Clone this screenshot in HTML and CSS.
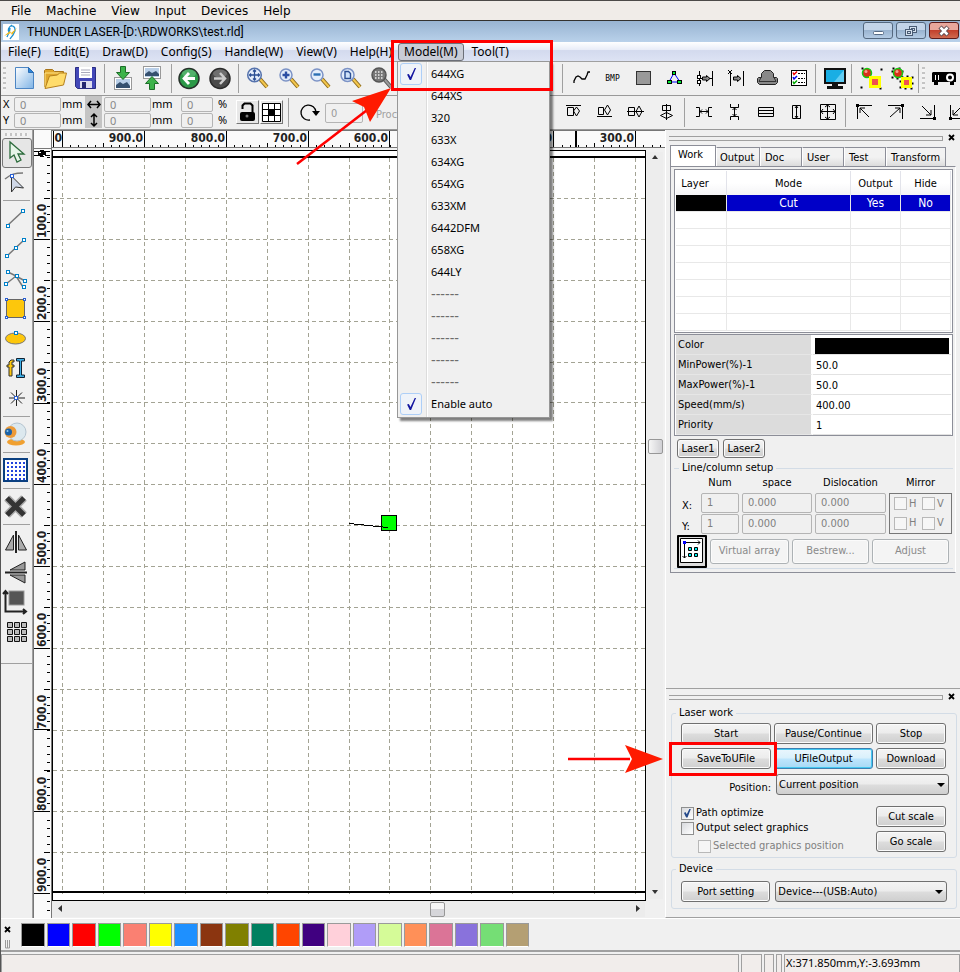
FILE: index.html
```html
<!DOCTYPE html>
<html lang="en">
<head>
<meta charset="utf-8">
<title>THUNDER LASER</title>
<link rel="stylesheet" href="styles.css">
</head>
<body>
<nav class="host-menu" aria-label="Virtual machine">
  <button>File</button><button>Machine</button><button>View</button><button>Input</button><button>Devices</button><button>Help</button>
</nav>
<div class="window">
  <header class="titlebar">
    <svg class="logo" width="16" height="16" viewBox="0 0 16 16"><rect width="16" height="16" fill="#fff"/><path d="M9 1C6 3 4 5 6 8M8 2c4-1 5 4 3 7-1 3-3 4-4 6M4 13c1-3 3-5 3-9" fill="none" stroke="#1c8fd0" stroke-width="1.300"/><path d="M1 12l6-5 1 2 6-5-5 7-1-2z" fill="#f0b81c"/></svg>
    <h1>THUNDER LASER-[D:\RDWORKS\test.rld]</h1>
    <div class="win-buttons">
      <button aria-label="Minimize"><svg width="30" height="16"><rect x="10.500" y="8.500" width="10" height="3" rx="1" fill="#fff" stroke="#566b85"/></svg></button>
      <button aria-label="Restore"><svg width="30" height="16" fill="#d5e1ee" stroke="#4a5c74"><rect x="13.500" y="3.500" width="7" height="6"/><rect x="15.500" y="5.500" width="3" height="2"/><rect x="9.500" y="6.500" width="7" height="6"/><rect x="11.500" y="8.500" width="3" height="2"/></svg></button>
      <button class="close" aria-label="Close"><svg width="30" height="16"><path d="M11 4l8 8M19 4l-8 8" stroke="#5c4a50" stroke-width="4.500"/><path d="M11.500 4.500l7 7M18.500 4.500l-7 7" stroke="#fff" stroke-width="2.500"/></svg></button>
    </div>
  </header>
  <nav class="menubar" aria-label="Main">
    <button>File(F)</button><button>Edit(E)</button><button>Draw(D)</button><button>Config(S)</button><button>Handle(W)</button><button>View(V)</button><button>Help(H)</button>
    <div class="open-menu">
      <button class="active">Model(M)</button>
      <ul class="popup">
        <li class="on"><button><i></i>644XG</button></li>
        <li><button>644XS</button></li>
        <li><button>320</button></li>
        <li><button>633X</button></li>
        <li><button>634XG</button></li>
        <li><button>654XG</button></li>
        <li><button>633XM</button></li>
        <li><button>6442DFM</button></li>
        <li><button>658XG</button></li>
        <li><button>644LY</button></li>
        <li class="off"><button disabled>------</button></li>
        <li class="off"><button disabled>------</button></li>
        <li class="off"><button disabled>------</button></li>
        <li class="off"><button disabled>------</button></li>
        <li class="off"><button disabled>------</button></li>
        <li class="on"><button><i></i>Enable auto</button></li>
      </ul>
      <span class="mark mark-model"></span>
      <svg class="arrow arrow-model" width="100" height="80"><path d="M2 77L76 20" stroke="#f00" stroke-width="2.500"/><path d="M96 1L57 14 69 20 75 35z" fill="#ff1a00"/></svg>
    </div>
    <button>Tool(T)</button>
  </nav>

  <div class="toolbar">
    <span class="grip"></span>
    <button class="tool" aria-label="New"><svg viewBox="0 0 31 32"><defs><linearGradient id="gp" x2="1" y2="1"><stop offset="0" stop-color="#fff"/><stop offset="1" stop-color="#7fb4e6"/></linearGradient></defs><path d="M5.500 5.500h13l5 5v16h-18z" fill="url(#gp)" stroke="#4d86c4"/><path d="M18.500 5.500v5h5z" fill="#2f86d6" stroke="#2a6db5"/></svg></button>
    <button class="tool" aria-label="Open"><svg viewBox="0 0 31 32"><path d="M3.500 25V8.500l1-1h7l2 2h9v3" fill="#e0a72c" stroke="#a8741a"/><path d="M4 26V11h17" fill="none" stroke="#ffe58a"/><path d="M4 26.500L8.500 14l8-1 2-2h7l-3 12z" fill="#ffdc6b" stroke="#b5801d"/></svg></button>
    <button class="tool" aria-label="Save"><svg viewBox="0 0 31 32"><path d="M3.500 5.500h20v21h-18l-2-2z" fill="#4348b8" stroke="#2a2e83"/><rect x="7" y="5" width="13" height="11" fill="#fff"/><path d="M9 8h9M9 10.500h9M9 13h9" stroke="#aab"/><rect x="8" y="19" width="12" height="7" fill="#dde"/><rect x="10" y="20" width="4" height="6" fill="#24266e"/></svg></button>
    <span class="sep"></span>
    <button class="tool" aria-label="Import"><svg viewBox="0 0 31 32"><rect x="6.500" y="15.500" width="17" height="12" fill="#fff" stroke="#999"/><rect x="8" y="17" width="14" height="9" fill="#b9cfe8"/><path d="M8 26l0-3 4-3 3 2 4-2 3 4v2z" fill="#35506f"/><path d="M12.500 4.500h5v6h4l-6.500 7-6.500-7h4z" fill="#3cb34a" stroke="#1d6e28"/></svg></button>
    <button class="tool" aria-label="Export"><svg viewBox="0 0 31 32"><rect x="4.500" y="4.500" width="17" height="12" fill="#fff" stroke="#999"/><rect x="6" y="6" width="14" height="9" fill="#b9cfe8"/><path d="M6 14l0-2 4-3 3 2 4-2 3 3v2z" fill="#35506f"/><path d="M10.500 27.500h5v-6h4l-6.500-7-6.500 7h4z" fill="#3cb34a" stroke="#1d6e28"/></svg></button>
    <span class="sep"></span>
    <button class="tool" aria-label="Undo"><svg viewBox="0 0 31 32"><circle cx="14" cy="16.500" r="10" fill="#2c9a48" stroke="#26312a" stroke-width="1.500"/><ellipse cx="14" cy="11.500" rx="7" ry="4" fill="#6cc184" opacity=".6"/><path d="M14 11l-5 5.500 5 5.500M9 16.500h11" fill="none" stroke="#fff" stroke-width="2.800"/></svg></button>
    <button class="tool" aria-label="Redo"><svg viewBox="0 0 31 32"><circle cx="14" cy="16.500" r="10" fill="#4a4a4a" stroke="#2b2b2b" stroke-width="1.500"/><ellipse cx="14" cy="11.500" rx="7" ry="4" fill="#888" opacity=".6"/><path d="M14 11l5 5.500-5 5.500M19 16.500H8" fill="none" stroke="#ccc" stroke-width="2.500"/></svg></button>
    <span class="sep"></span>
    <button class="tool" aria-label="Pan"><svg viewBox="0 0 31 32"><path d="M18 17l7 8" stroke="#8b6a1d" stroke-width="4"/><path d="M18 17l7 8" stroke="#f3c64c" stroke-width="2"/><circle cx="12.500" cy="13" r="6.800" fill="#e4eefb" stroke="#5673ad" stroke-width="1.500"/><path d="M12.500 8v10M7.500 13h10M11 9.500l1.500-1.500 1.500 1.500M11 16.500l1.500 1.500 1.500-1.500M9 11.500L7.500 13 9 14.500M16 11.500l1.500 1.500-1.500 1.500" fill="none" stroke="#2b4f94" stroke-width="1.300"/></svg></button>
    <button class="tool" aria-label="Zoom in"><svg viewBox="0 0 31 32"><path d="M18 17l7 8" stroke="#8b6a1d" stroke-width="4"/><path d="M18 17l7 8" stroke="#f3c64c" stroke-width="2"/><circle cx="13" cy="13" r="6" fill="#e4eefb" stroke="#7c93c6" stroke-width="1.500"/><path d="M13 9.500v7M9.500 13h7" stroke="#2b4fa4" stroke-width="2.400"/></svg></button>
    <button class="tool" aria-label="Zoom out"><svg viewBox="0 0 31 32"><path d="M18 17l7 8" stroke="#8b6a1d" stroke-width="4"/><path d="M18 17l7 8" stroke="#f3c64c" stroke-width="2"/><circle cx="13" cy="13" r="6" fill="#e4eefb" stroke="#7c93c6" stroke-width="1.500"/><path d="M9.500 12.500h7" stroke="#2b6fb4" stroke-width="2.400"/></svg></button>
    <button class="tool" aria-label="Zoom page"><svg viewBox="0 0 31 32"><path d="M18 17l7 8" stroke="#8b6a1d" stroke-width="4"/><path d="M18 17l7 8" stroke="#f3c64c" stroke-width="2"/><circle cx="12.500" cy="13" r="6.500" fill="#e4eefb" stroke="#7c93c6" stroke-width="1.500"/><path d="M10 9.500h3.500l2 2v5H10z" fill="#cfe2fa" stroke="#2b4f94" stroke-width="1.400"/></svg></button>
    <button class="tool" aria-label="Zoom selection"><svg viewBox="0 0 31 32"><path d="M18 17l7 8" stroke="#555" stroke-width="4"/><path d="M18 17l7 8" stroke="#999" stroke-width="2"/><circle cx="13" cy="13" r="7" fill="#777" stroke="#555" stroke-width="1.500"/><path d="M9 10h9M9 13h9M9 16h9" stroke="#eee" stroke-width="1.300" stroke-dasharray="1.500 1.500"/></svg></button>
    <span class="covered"></span>
    <span class="sep"></span>
    <button class="tool" aria-label="Curve"><svg viewBox="0 0 31 32"><path d="M8 21v-2l2-4 2-1 2 1 2 2h3l2-4 1-3h2" fill="none" stroke="#000" stroke-width="1.300"/></svg></button>
    <button class="tool" aria-label="Bitmap"><svg viewBox="0 0 31 32"><text x="15.500" y="19" class="bmp">BMP</text></svg></button>
    <button class="tool" aria-label="Fill"><svg viewBox="0 0 31 32"><rect x="8.500" y="9.500" width="14" height="13" fill="#999" stroke="#333"/></svg></button>
    <button class="tool" aria-label="Nodes"><svg viewBox="0 0 31 32"><path d="M15 11l-5 9M15 11l6 9M10 20h10" stroke="#00f"/><g fill="#0e3" stroke="#000"><rect x="13.500" y="9.500" width="3" height="3"/><rect x="8.500" y="18.500" width="4" height="3"/><rect x="18.500" y="18.500" width="4" height="3"/></g></svg></button>
    <button class="tool" aria-label="Align ends"><svg viewBox="0 0 31 32"><path d="M9.500 9v15M22.500 9v15M9 16.500h14" stroke="#000"/><path d="M12.500 15h4v-1.500l3.500 3-3.500 3V18h-4z" fill="#888" stroke="#000"/><rect x="7.500" y="13.500" width="3" height="3" fill="#fff" stroke="#000"/><rect x="7.500" y="18.500" width="3" height="3" fill="#fff" stroke="#000"/></svg></button>
    <button class="tool" aria-label="Align edge"><svg viewBox="0 0 31 32"><path d="M9.500 9v15M22.500 9v15M7 8l4 4M11 8l-4 4" stroke="#000"/><path d="M12.500 15h4v-1.500l3.500 3-3.500 3V18h-4z" fill="#888" stroke="#000"/></svg></button>
    <button class="tool" aria-label="Home"><svg viewBox="0 0 31 32"><path d="M12.500 8.500h6l3 3v4h3l1 1v4l-2 2h-16l-2-2v-4l1-1h3v-4z" fill="#888" stroke="#222"/><path d="M9 15.500l-2 4h17l-2-4" fill="none" stroke="#333"/></svg></button>
    <button class="tool" aria-label="Options"><svg viewBox="0 0 31 32"><rect x="8.500" y="8.500" width="15" height="15" fill="#fff" stroke="#000"/><path d="M15 11.500h7M15 16.500h7M15 20.500h7" stroke="#000" stroke-dasharray="2 1"/><g fill="none" stroke-width="1.500"><path d="M10 10.500l1 2 3-3" stroke="#e00"/><path d="M10 15l1 2 3-3" stroke="#00e"/><path d="M10 19.500l1 2 3-3" stroke="#0a0"/></g></svg></button>
    <span class="sep"></span>
    <button class="tool" aria-label="Preview"><svg viewBox="0 0 31 32"><rect x="5" y="6" width="22" height="16" fill="#111"/><rect x="7" y="8" width="18" height="12" fill="#19aee4"/><path d="M15 20L25 8v12z" fill="#62cdf3"/><path d="M13 22h6v2h5v3H8v-3h5z" fill="#111"/></svg></button>
    <span class="sep"></span>
    <button class="tool" aria-label="Group"><svg viewBox="0 0 31 32"><path d="M6.500 6.500h20v20h-20z" fill="none" stroke="#000" stroke-width="2" stroke-dasharray="2 18"/><circle cx="12" cy="11" r="4.500" fill="#d8301a" stroke="#1c1" stroke-width="1.500"/><circle cx="11" cy="9.500" r="1.500" fill="#f9a090"/><rect x="15.500" y="15.500" width="9" height="9" fill="#f05050" stroke="#ff0" stroke-width="3"/></svg></button>
    <button class="tool" aria-label="Ungroup"><svg viewBox="0 0 31 32"><path d="M6.500 6.500h10v10h-10zM14.500 14.500h12v12h-12z" fill="none" stroke="#000" stroke-width="2" stroke-dasharray="2 4"/><circle cx="12" cy="11" r="4.500" fill="#d8301a" stroke="#1c1" stroke-width="1.500"/><circle cx="11" cy="9.500" r="1.500" fill="#f9a090"/><rect x="16.500" y="16.500" width="8" height="8" fill="#f05050" stroke="#ff0" stroke-width="3"/></svg></button>
    <span class="sep"></span>
    <span class="grip"></span>
    <button class="tool" aria-label="Device"><svg viewBox="0 0 31 32"><path d="M4 10h22l1 1v9h-2v3h-4v-3H9v3H5v-3H3v-9z" fill="#000"/><path d="M6.500 13v5M9.500 13v5" stroke="#fff"/><circle cx="21" cy="15.500" r="3" fill="none" stroke="#fff" stroke-width="2"/></svg></button>
  </div>

  <div class="toolbar second">
    <div class="coords">
      <label for="px">X</label><input id="px" value="0" disabled><span>mm</span><i class="arr"><svg width="18" height="16"><path d="M3 8.500h12M6 5L3 8.500 6 12M12 5l3 3.500-3 3.500" fill="none" stroke="#000" stroke-width="1.500"/></svg></i><input aria-label="Width" value="0" disabled><span>mm</span><input class="pct" aria-label="Width percent" value="0" disabled><span>%</span>
      <label for="py">Y</label><input id="py" value="0" disabled><span>mm</span><i class="arr"><svg width="18" height="16"><path d="M9 2v12M6 5l3-3 3 3M6 11l3 3 3-3" fill="none" stroke="#000" stroke-width="1.500"/></svg></i><input aria-label="Height" value="0" disabled><span>mm</span><input class="pct" aria-label="Height percent" value="0" disabled><span>%</span>
    </div>
    <button class="raised" aria-label="Lock ratio"><svg width="20" height="22"><path d="M5.500 8V4.500l2-2h6l2 2V12" fill="none" stroke="#000" stroke-width="2"/><rect x="3" y="11" width="15" height="9" rx="2"/><circle cx="10" cy="15" r="1.500" fill="#777"/></svg></button>
    <button class="raised" aria-label="Anchor"><svg width="20" height="22"><path d="M1.500 2.500h18v18h-18zM7.500 2v18M13.500 2v18M1 8.500h18M1 14.500h18" fill="#fff" stroke="#000"/><rect x="8" y="9" width="5" height="5"/></svg></button>
    <span class="sep"></span>
    <button class="tool rotate" aria-label="Rotate"><svg viewBox="0 0 31 32"><path d="M17 24a7.500 7.500 0 1 1 6-8" fill="none" stroke="#000" stroke-width="1.300"/><path d="M19 15h8l-4 5z"/></svg></button>
    <input class="angle" aria-label="Angle" value="0" disabled>
    <span class="process">Process</span>
    <div class="aligns">
      <button class="tool" aria-label="Top"><svg viewBox="0 0 31 32"><path d="M8 9.500h15M9.500 11.500h6v8h-6zM18.500 11l3 4-3 5-3-5z" fill="none" stroke="#000"/></svg></button>
      <button class="tool" aria-label="Bottom"><svg viewBox="0 0 31 32"><path d="M8 20.500h15M9.500 11.500h5v7h-5zM18.500 9l3 5-3 5-3-5z" fill="none" stroke="#000"/></svg></button>
      <button class="tool" aria-label="Middle"><svg viewBox="0 0 31 32"><path d="M7 15.500h17M8.500 11.500h6v8h-6zM19 10l3 5.500-3 5.500-3-5.500z" fill="none" stroke="#000"/></svg></button>
      <button class="tool" aria-label="Center"><svg viewBox="0 0 31 32"><path d="M15.500 8v16M11.500 9.500h8v5h-8zM9.500 19.500l6-3 6 3-6 3z" fill="none" stroke="#000"/></svg></button>
      <span class="sep"></span>
      <button class="tool" aria-label="Horizontal spacing"><svg viewBox="0 0 31 32"><path d="M8 11.500h3.500v9H8M24 11.500h-3.500v9H24M12 15.500h8M14 13.500l-2 2 2 2M18 13.500l2 2-2 2" fill="none" stroke="#000"/></svg></button>
      <button class="tool" aria-label="Vertical spacing"><svg viewBox="0 0 31 32"><path d="M11.500 8v3.500h8V8M11.500 24v-3.500h8V24M15.500 12v8M13.500 14l2-2 2 2M13.500 18l2 2 2-2" fill="none" stroke="#000"/></svg></button>
      <button class="tool" aria-label="Same width"><svg viewBox="0 0 31 32"><path d="M8.500 11.500h15v9h-15zM8.500 14.500h15M8.500 17.500h15" fill="none" stroke="#000"/></svg></button>
      <button class="tool" aria-label="Same height"><svg viewBox="0 0 31 32"><path d="M11.500 9.500h8v13h-8zM15.500 10v12M14 12l1.500-2 1.500 2M14 20l1.500 2 1.500-2" fill="none" stroke="#000"/></svg></button>
      <button class="tool" aria-label="Same size"><svg viewBox="0 0 31 32"><path d="M8.500 8.500h15v15h-15zM15.500 9v14M9 15.500h14M13 11l2.500-2 2.500 2M13 21l2.500 2 2.500-2M11 13l-2 2.500 2 2.500M21 13l2 2.500-2 2.500" fill="none" stroke="#000"/></svg></button>
      <span class="sep"></span>
      <button class="tool" aria-label="Top left"><svg viewBox="0 0 31 32"><path d="M8.500 23V9.500H23M11 12l9 9M11 17v-5h5" fill="none" stroke="#000"/><rect x="7" y="8" width="3" height="3"/></svg></button>
      <button class="tool" aria-label="Top right"><svg viewBox="0 0 31 32"><path d="M22.500 23V9.500H8M20 12l-10 9M20 17v-5h-5" fill="none" stroke="#000"/><rect x="21" y="8" width="3" height="3"/></svg></button>
      <button class="tool" aria-label="Bottom right"><svg viewBox="0 0 31 32"><path d="M23.500 9v13.500H9M20 19l-9-9M20 14v5h-5" fill="none" stroke="#000"/><rect x="22" y="21" width="3" height="3"/></svg></button>
      <button class="tool" aria-label="Bottom left"><svg viewBox="0 0 31 32"><path d="M8.500 9v13.500H23M11 19l9-9M11 14v5h5" fill="none" stroke="#000"/><rect x="7" y="21" width="3" height="3"/></svg></button>
    </div>
  </div>

  <main>
    <div class="palette-tools">
      <div class="toolset">
        <span class="hgrip"></span>
        <button class="picked" aria-label="Select"><svg viewBox="0 0 31 30"><path d="M9 4v16l4-3 3 7 4-2-3-6h6z" fill="#e6f5e8" stroke="#2c6b3c" stroke-width="1.300"/></svg></button>
        <button aria-label="Edit nodes"><svg viewBox="0 0 31 30"><path d="M5 11c6-5 10-6 18-6" fill="none" stroke="#777" stroke-width="1.500"/><path d="M11.500 8v16l4-5 8 1z" fill="#cfd8e8" stroke="#333"/><rect x="10.500" y="6.500" width="3" height="3" fill="#fff" stroke="#2a5fd0"/></svg></button>
        <hr class="first">
        <button aria-label="Line"><svg viewBox="0 0 31 30"><path d="M8 22L23 8" stroke="#777" stroke-width="1.500"/><g fill="#fff" stroke="#0080c8"><rect x="6.500" y="21.500" width="3" height="3"/><rect x="21.500" y="6.500" width="3" height="3"/></g></svg></button>
        <button aria-label="Polyline"><svg viewBox="0 0 31 30"><path d="M7 23L24 7" stroke="#777" stroke-width="1.500"/><g fill="#fff" stroke="#0080c8"><rect x="5.500" y="21.500" width="3" height="3"/><rect x="14.500" y="13.500" width="3" height="3"/><rect x="22.500" y="5.500" width="3" height="3"/></g></svg></button>
        <button aria-label="Curve"><svg viewBox="0 0 31 30"><path d="M6 21l10-8 7 11M8 9l8 4 9 5" fill="none" stroke="#777" stroke-width="1.500"/><g fill="#fff" stroke="#0080c8"><rect x="6.500" y="7.500" width="3" height="3"/><rect x="4.500" y="19.500" width="3" height="3"/><rect x="15.500" y="11.500" width="3" height="3"/><rect x="23.500" y="16.500" width="3" height="3"/><rect x="22.500" y="22.500" width="3" height="3"/></g></svg></button>
        <button aria-label="Rectangle"><svg viewBox="0 0 31 30"><rect x="6.500" y="6.500" width="18" height="18" fill="#fdc70c" stroke="#666"/><g fill="#fff" stroke="#2a5fd0"><rect x="5.500" y="5.500" width="2" height="2"/><rect x="23.500" y="5.500" width="2" height="2"/><rect x="5.500" y="23.500" width="2" height="2"/><rect x="23.500" y="23.500" width="2" height="2"/></g></svg></button>
        <button aria-label="Ellipse"><svg viewBox="0 0 31 30"><ellipse cx="15.500" cy="15.500" rx="10" ry="5.500" fill="#fdc70c" stroke="#777"/><rect x="14.500" y="8.500" width="3" height="3" fill="#fff" stroke="#0080c8"/></svg></button>
        <button aria-label="Text"><svg viewBox="0 0 31 30"><path d="M14 7h-3l-2 2v3H7v2h2v9h3v-9h2v-2h-2V9h2z" fill="#fdc70c" stroke="#333"/><path d="M16.500 5.500h8v2.500h-3v14h3v2.500h-8v-2.500h3V8h-3z" fill="#3fb0e8" stroke="#123"/></svg></button>
        <button aria-label="Point"><svg viewBox="0 0 31 30"><path d="M16.500 7v16M9 15h16M11 9.500l11 11M22 9.500l-11 11" stroke="#222"/><rect x="14.500" y="13.500" width="3" height="3" fill="#fff" stroke="#2a5fd0"/></svg></button>
        <hr>
        <button aria-label="Camera"><svg viewBox="0 0 31 30"><ellipse cx="16" cy="23" rx="9" ry="3.500" fill="#f0a030"/><circle cx="17" cy="13" r="9" fill="#dce8ee" stroke="#b4c4d0"/><circle cx="10.500" cy="13" r="6" fill="#ec9a38"/><circle cx="8.500" cy="13" r="3.500" fill="#1b62a8"/><circle cx="7.500" cy="12" r="1" fill="#8cc8f0"/></svg></button>
        <hr>
        <button aria-label="Grid"><svg viewBox="0 0 31 30"><rect x="4" y="4" width="23" height="22" fill="#fff" stroke="#0a3f80" stroke-width="2"/><path d="M7 8h18M7 12h18M7 16h18M7 20h18M7 24h18" stroke="#24d" stroke-width="2" stroke-dasharray="2 2"/></svg></button>
        <hr>
        <button aria-label="Delete"><svg viewBox="0 0 31 30"><path d="M7 7l17 17M24 7L7 24" stroke="#aaa" stroke-width="8"/><path d="M7 7l17 17M24 7L7 24" stroke="#333" stroke-width="5"/></svg></button>
        <hr>
        <button aria-label="Mirror horizontal"><svg viewBox="0 0 31 30"><path d="M16 4v22" stroke="#222" stroke-width="2"/><path d="M13.500 8v15h-8zM18.500 8v15h8z" fill="#aaa" stroke="#222"/></svg></button>
        <button aria-label="Mirror vertical"><svg viewBox="0 0 31 30"><path d="M5 15.500h22" stroke="#222" stroke-width="2"/><path d="M10 13h15V5zM10 18h15v8z" fill="#999" stroke="#222"/></svg></button>
        <button aria-label="Place"><svg viewBox="0 0 31 30"><rect x="9" y="4" width="15" height="14" fill="#555" stroke="#999"/><path d="M5.500 5v19.500H26M23 22l3 2.500-3 2.500M3 7l2.500-3L8 7" fill="none" stroke="#222" stroke-width="2"/></svg></button>
        <button aria-label="Array"><svg viewBox="0 0 31 30"><g fill="#bbb" stroke="#111"><path d="M7.500 5.500h5v5h-5zM14.500 5.500h5v5h-5zM21.500 5.500h5v5h-5zM7.500 12.500h5v5h-5zM14.500 12.500h5v5h-5zM21.500 12.500h5v5h-5zM7.500 19.500h5v5h-5zM14.500 19.500h5v5h-5zM21.500 19.500h5v5h-5z"/></g></svg></button>
      </div>
    </div>

    <section class="editor" aria-label="Drawing">
      <div class="corner"></div>
      <svg class="ruler ruler-h">
        <path d="M10 15.500H2000" stroke="#000" stroke-width="3" stroke-dasharray="1 7.190"/>
        <path d="M51.500 12v5M133.500 12v5M215.500 12v5M297.500 12v5M378.500 12v5M460.500 12v5M542.500 12v5" stroke="#000"/>
        <path d="M10.500 0v17M92.500 0v17M174.500 0v17M256.500 0v17M337.500 0v17M419.500 0v17M501.500 0v17M583.500 0v17M1.500 0v17" stroke="#000"/>
        <path d="M524 0v17" stroke="#000" stroke-width="2"/>
        <text x="10" y="11">0</text><text x="91" y="11">900.0</text><text x="173" y="11">800.0</text><text x="255" y="11">700.0</text><text x="336" y="11">600.0</text><text x="500" y="11">0</text><text x="582" y="11">300.0</text>
      </svg>
      <svg class="ruler ruler-v">
        <path d="M14.500 8V2000" stroke="#000" stroke-width="3" stroke-dasharray="1 7.180"/>
        <path d="M10 49.500h6M10 131.500h6M10 213.500h6M10 294.500h6M10 376.500h6M10 458.500h6M10 540.500h6M10 621.500h6M10 703.500h6" stroke="#000"/>
        <path d="M0 90.500h16M0 172.500h16M0 254.500h16M0 335.500h16M0 417.500h16M0 499.500h16M0 580.500h16M0 662.500h16M0 744.500h16" stroke="#000"/>
        <path d="M0 2.500h16M0 6.500h16" stroke="#000"/><ellipse cx="8" cy="4.500" rx="4" ry="3.500"/><path d="M5 3h2M9 6h2" stroke="#fff"/>
        <g><text transform="translate(12 89) rotate(-90)">100.0</text><text transform="translate(12 171) rotate(-90)">200.0</text><text transform="translate(12 253) rotate(-90)">300.0</text><text transform="translate(12 334) rotate(-90)">400.0</text><text transform="translate(12 416) rotate(-90)">500.0</text><text transform="translate(12 498) rotate(-90)">600.0</text><text transform="translate(12 580) rotate(-90)">700.0</text><text transform="translate(12 662) rotate(-90)">800.0</text><text transform="translate(12 743) rotate(-90)">900.0</text></g>
      </svg>
      <div class="canvas">
        <svg width="100%" height="100%">
          <path class="grid" d="M9.500 7v736M50.500 7v736M91.500 7v736M132.500 7v736M173.500 7v736M214.500 7v736M255.500 7v736M296.500 7v736M336.500 7v736M377.500 7v736M418.500 7v736M459.500 7v736M500.500 7v736M541.500 7v736M582.500 7v736"/>
          <path class="grid" d="M0 47.500h592M0 88.500h592M0 129.500h592M0 170.500h592M0 211.500h592M0 251.500h592M0 292.500h592M0 333.500h592M0 374.500h592M0 415.500h592M0 456.500h592M0 497.500h592M0 538.500h592M0 579.500h592M0 619.500h592M0 660.500h592M0 701.500h592"/>
          <path d="M0 6h2000M0 741h2000" stroke="#000" stroke-width="2"/>
          <rect x="328.500" y="364.500" width="15" height="15" fill="#0f0" stroke="#000"/>
          <path d="M296 372.500L335 376.500" stroke="#000"/>
        </svg>
      </div>
      <div class="vscroll"><svg width="16" height="10"><path d="M5 7h6l-3-4z" fill="#333"/></svg><span class="thumb"></span><svg width="16" height="10"><path d="M5 1h6l-3 4z" fill="#333"/></svg></div>
      <div class="hscroll"><svg width="14" height="16"><path d="M10 4v7L6 7.500z" fill="#333"/></svg><span class="thumb"></span><svg width="12" height="16"><path d="M3 4v7l4-3.500z" fill="#333"/></svg></div>
    </section>

    <aside class="dock">
      <section class="layers">
        <div class="dock-head"><span></span><button aria-label="Close panel"><svg width="8" height="8"><path d="M1 1l5 5M6 1L1 6" stroke="#000" stroke-width="1.800"/></svg></button></div>
        <div class="tabs"><button class="current">Work</button><button>Output</button><button>Doc</button><button>User</button><button>Test</button><button>Transform</button></div>
        <div class="tab-body">
          <table class="layer-list">
            <thead><tr><th>Layer</th><th>Mode</th><th>Output</th><th>Hide</th></tr></thead>
            <tbody>
              <tr class="selected"><td></td><td>Cut</td><td>Yes</td><td>No</td></tr>
              <tr><td></td><td></td><td></td><td></td></tr><tr><td></td><td></td><td></td><td></td></tr><tr><td></td><td></td><td></td><td></td></tr><tr><td></td><td></td><td></td><td></td></tr><tr><td></td><td></td><td></td><td></td></tr><tr><td></td><td></td><td></td><td></td></tr><tr><td></td><td></td><td></td><td></td></tr>
            </tbody>
          </table>
          <table class="props">
            <tr><th>Color</th><td><span class="color"></span></td></tr>
            <tr><th>MinPower(%)-1</th><td>50.0</td></tr>
            <tr><th>MaxPower(%)-1</th><td>50.0</td></tr>
            <tr><th>Speed(mm/s)</th><td>400.00</td></tr>
            <tr><th>Priority</th><td>1</td></tr>
          </table>
          <div class="lasers"><button class="btn">Laser1</button><button class="btn">Laser2</button></div>
          <fieldset class="setup">
            <legend>Line/column setup</legend>
            <div class="setup-grid">
              <span></span><span class="h">Num</span><span class="h">space</span><span class="h">Dislocation</span><span class="h">Mirror</span>
              <span class="axis">X:</span><input aria-label="X number" value="1" disabled><input aria-label="X space" value="0.000" disabled><input aria-label="X dislocation" value="0.000" disabled>
              <div class="mirror">
                <label><input type="checkbox" disabled>H</label><label><input type="checkbox" disabled>V</label>
                <label><input type="checkbox" disabled>H</label><label><input type="checkbox" disabled>V</label>
              </div>
              <span class="axis">Y:</span><input aria-label="Y number" value="1" disabled><input aria-label="Y space" value="0.000" disabled><input aria-label="Y dislocation" value="0.000" disabled>
            </div>
            <div class="setup-actions">
              <button class="array" aria-label="Array origin"><svg width="26" height="28"><path d="M1.500 1.500h22v24h-22z" fill="#fff" stroke="#000"/><path d="M5.500 6v15M6 5.500h15M3.500 19l2 2 2-2M19 3.500l2 2-2 2" fill="none" stroke="#000"/><rect x="4" y="4" width="3" height="3" fill="#00f"/><g fill="#0ee" stroke="#000"><path d="M9.500 10.500h3v3h-3zM15.500 10.500h3v3h-3zM9.500 16.500h3v3h-3zM15.500 16.500h3v3h-3z"/></g></svg></button>
              <button class="btn" disabled>Virtual array</button><button class="btn" disabled>Bestrew...</button><button class="btn" disabled>Adjust</button>
            </div>
          </fieldset>
        </div>
      </section>

      <section class="laser">
        <div class="dock-head"><span></span><button aria-label="Close panel"><svg width="8" height="8"><path d="M1 1l5 5M6 1L1 6" stroke="#000" stroke-width="1.800"/></svg></button></div>
        <fieldset class="work">
          <legend>Laser work</legend>
          <div class="work-grid">
            <button class="btn">Start</button><button class="btn">Pause/Continue</button><button class="btn">Stop</button>
            <div class="save"><button class="btn">SaveToUFile</button>
              <span class="mark mark-save"></span>
              <svg class="arrow arrow-save" width="96" height="30"><path d="M0 15h62" stroke="#f00" stroke-width="2.500"/><path d="M95 15L57 1l7 14-7 14z" fill="#ff1a00"/></svg>
            </div>
            <button class="btn hot">UFileOutput</button><button class="btn">Download</button>
          </div>
          <div class="position"><label for="pos">Position:</label><span class="combo"><select id="pos"><option>Current position</option></select></span></div>
          <div class="options">
            <div class="checks">
              <label><input type="checkbox" checked>Path optimize</label>
              <label><input type="checkbox">Output select graphics</label>
              <label class="sub"><input type="checkbox" disabled>Selected graphics position</label>
            </div>
            <div class="scales"><button class="btn">Cut scale</button><button class="btn">Go scale</button></div>
          </div>
        </fieldset>
        <fieldset class="device">
          <legend>Device</legend>
          <button class="btn">Port setting</button>
          <span class="combo"><select aria-label="Device"><option>Device---(USB:Auto)</option></select></span>
        </fieldset>
      </section>
    </aside>
  </main>

  <div class="colors">
    <div class="colors-side"><svg width="8" height="26"><path d="M1 4l5 5M6 4L1 9" stroke="#000" stroke-width="1.800"/><path d="M1.500 17v8h2v-8M5.500 17v8h-2" fill="none" stroke="#999"/></svg></div>
    <div class="swatches">
      <button class="c1" aria-label="Black"></button><button class="c2" aria-label="Blue"></button><button class="c3" aria-label="Red"></button><button class="c4" aria-label="Lime"></button><button class="c5" aria-label="Salmon"></button><button class="c6" aria-label="Yellow"></button><button class="c7" aria-label="Sky"></button><button class="c8" aria-label="Brown"></button><button class="c9" aria-label="Olive"></button><button class="c10" aria-label="Teal"></button><button class="c11" aria-label="Orange"></button><button class="c12" aria-label="Indigo"></button><button class="c13" aria-label="Pink"></button><button class="c14" aria-label="Lavender"></button><button class="c15" aria-label="Pale lime"></button><button class="c16" aria-label="Coral"></button><button class="c17" aria-label="Rose"></button><button class="c18" aria-label="Violet"></button><button class="c19" aria-label="Green"></button><button class="c20" aria-label="Tan"></button>
    </div>
  </div>
  <footer class="status"><span class="s1"></span><span class="s2"></span><span class="s3"></span><span class="s4"></span><span class="s5">X:371.850mm,Y:-3.693mm</span></footer>
</div>
</body>
</html>
```
FILE: styles.css
```css
* { box-sizing: border-box; }
html, body { margin: 0; height: 100%; }
body {
  display: flex; flex-direction: column;
  min-height: 100vh; overflow: hidden;
  background: #f0f0f0; color: #000;
  font-family: "DejaVu Sans Condensed", "DejaVu Sans", sans-serif;
  font-size: 11px; line-height: 14px;
}
button, input, select { font: inherit; color: inherit; margin: 0; padding: 0; border: 0; background: none; border-radius: 0; }
svg { display: block; }
fieldset { margin: 0; min-width: 0; border: 1px solid #d3dce6; border-radius: 3px; }
legend { padding: 0 3px; }

.host-menu {
  display: flex; flex: none; height: 21px; gap: 15px; padding-left: 11px;
  border-top: 1px solid #4c4a48; border-bottom: 1px solid #33322f;
  background: #f0ece8; font-family: "DejaVu Sans", sans-serif; font-size: 12px;
}
.window { flex: 1; display: flex; flex-direction: column; min-height: 0; border-left: 1px solid #555; }

.titlebar {
  display: flex; align-items: center; flex: none; height: 21px; padding: 0 1px 0 2px;
  background: linear-gradient(#98b4d2, #b9d1ea);
  font-family: Roboto, sans-serif;
}
.titlebar h1 { margin: 0 auto 0 8px; font-size: 12px; font-weight: 400; }
.win-buttons { display: flex; gap: 3px; align-self: flex-start; padding-top: 1px; }
.win-buttons button { border: 1px solid #54687f; border-radius: 3px; background: linear-gradient(#c3d4e8 45%, #9ab4d0 50%, #b4cbe4); width: 30px; height: 17px; overflow: hidden; }
.win-buttons svg { margin: -1px; }
.win-buttons .close { border-color: #5c1c1c; background: linear-gradient(#e8a79c 45%, #c2402c 50%, #cf6a50); }

.menubar {
  display: flex; flex: none; height: 20px; padding-left: 7px; gap: 13px;
  background: linear-gradient(#fff, #e9edf8 40%, #d3daee 45%, #dde3f4);
  border-bottom: 1px solid #a0a0a0;
  font-family: "Noto Sans", sans-serif; font-size: 12px;
}
.open-menu { position: relative; display: flex; margin: 0 -5px 0 -7px; z-index: 5; }
.open-menu .active { height: 18px; margin-top: 1px; padding: 0 5px; border: 1px solid #6c6f78; border-radius: 3px; background: #c9ccd6; }
.popup {
  position: absolute; left: -1px; top: 19px; width: 153px; margin: 0; padding: 1px 2px 2px; list-style: none;
  border: 1px solid #979797; background: linear-gradient(90deg, #f0f0f0 28px, #dcdcdc 28px, #dcdcdc 29px, #fff 29px, #fff 30px, #f0f0f0 30px);
  box-shadow: 3px 3px 2px rgba(0, 0, 0, .5); font-size: 11px;
}
.popup button { display: flex; align-items: center; width: 100%; height: 22px; padding-left: 31px; }
.popup .on button { padding-left: 0; }
.popup i { position: relative; width: 22px; height: 22px; margin-right: 9px; border: 1px solid #aecff7; border-radius: 3px; background: #eff3f9; }
.popup i::after { content: ""; position: absolute; left: 6px; top: 4px; width: 9px; height: 12px; background: #1316a0; clip-path: polygon(0 55%, 20% 50%, 38% 75%, 85% 0, 100% 0, 45% 100%, 30% 100%); }
.popup .off { color: #6d6d6d; font-family: "Liberation Sans", sans-serif; font-size: 14px; }
.mark { position: absolute; border: 3px solid #f00; pointer-events: none; }
.arrow { position: absolute; pointer-events: none; }
.mark-model { left: -7px; top: -2px; width: 162px; height: 51px; }
.arrow-model { left: -103px; top: 45px; }

.toolbar { display: flex; flex: none; height: 34px; padding-left: 2px; overflow: hidden; border-bottom: 1px solid #999; background: #f0f0f0; }
.tool { flex: none; width: 31px; height: 32px; }
.tool svg { width: 31px; height: 32px; overflow: visible; }
.sep { flex: none; width: 1px; margin: 2px 3px 2px 1px; background: #a0a0a0; }
.grip { flex: none; width: 3px; height: 24px; margin: 5px 4px 0 0; background: repeating-linear-gradient(#c4c4c4 0 2px, #f4f4f4 2px 5px); }
.covered { flex: none; width: 164px; }
.bmp { font: 8px "DejaVu Sans Mono", monospace; text-anchor: middle; }

.coords { display: grid; flex: none; grid-template-columns: 11px 47px 24px 19px 47px 30px 32px 23px; grid-template-rows: 16px 16px; align-items: center; font-family: "Noto Sans", sans-serif; }
.coords input, .angle { width: 100%; height: 15px; padding: 0 5px; border: 1px solid #b4b4b4; border-radius: 2px; background: #f0f0f0; color: #888; }
.coords span { padding-left: 1px; }
.coords .pct + span { padding-left: 5px; }
.arr { width: 17px; height: 16px; background: #c4c4c4; }
.raised { flex: none; width: 23px; height: 24px; margin-top: 4px; margin-right: 1px; border: 1px solid #fff; border-right-color: #777; border-bottom-color: #777; background: #e8e8e8; }
.second .rotate { margin-left: 1px; }
.second > .sep { margin-left: 4px; }
.angle { flex: none; width: 38px; height: 20px; margin: 7px 0 0 1px; color: #999; }
.process { flex: none; width: 195px; padding: 12px 0 0 13px; color: #a0a0a0; }
.aligns { display: flex; flex: none; }
.aligns .sep { margin-left: 2px; }

main { flex: 1; display: flex; min-height: 0; }
.palette-tools { flex: none; width: 32px; border-right: 1px solid #a0a0a0; }
.toolset { display: flex; flex-direction: column; padding-bottom: 16px; border-bottom: 1px solid #a0a0a0; }
.toolset button { height: 30px; }
.toolset button svg { width: 31px; height: 30px; margin-left: -1px; }
.toolset .picked { margin: 0 0 0 1px; width: 30px; border: 1px solid #777; border-radius: 3px; background: #e6e6e6; }
.toolset .picked svg { margin: -1px 0 0 -2px; }
.toolset hr { width: 27px; height: 1px; margin: 3px 0 2px 2px; border: 0; background: #a0a0a0; }
.toolset .first { margin-top: 2px; }
.hgrip { height: 3px; margin: 3px 4px 2px; background: repeating-linear-gradient(90deg, #c4c4c4 0 2px, #f4f4f4 2px 5px); }

.editor { flex: 1; min-width: 0; display: grid; grid-template-columns: 18px 1fr 19px; grid-template-rows: 19px 1fr 17px; border-left: 1px solid #777; }
.corner { background: #fafafa; border-bottom: 1px solid #777; border-right: 1px solid #777; }
.ruler { width: 100%; height: 100%; background: #fafafa; shape-rendering: crispEdges; }
.ruler text { font-family: "DejaVu Sans Condensed", sans-serif; font-size: 12px; font-weight: 700; fill: #222; }
.ruler-h { grid-column: 2 / 4; height: 18px; border-bottom: 1px solid #777; border-top: 1px solid #777; }
.ruler-h text { text-anchor: end; }
.ruler-v { grid-row: 2 / 4; border-right: 1px solid #777; }
.canvas { margin-top: 1px; border: 1px solid #000; background: #fff; min-width: 0; min-height: 0; overflow: hidden; }
.canvas svg { shape-rendering: crispEdges; }
.canvas .grid { fill: none; stroke: #a3a394; stroke-dasharray: 4 3; }
.vscroll, .hscroll { display: flex; justify-content: space-between; }
.vscroll { flex-direction: column; width: 16px; margin: 3px 0 2px 1px; align-items: center; background: #ededed; }
.hscroll { align-items: center; margin: 0 1px 1px 0; background: #ececec; }
.thumb { width: 15px; height: 15px; border: 1px solid #979797; border-radius: 2px; background: linear-gradient(90deg, #f6f6f6, #d0d0d4); }
.hscroll .thumb { background: linear-gradient(#f6f6f6 50%, #d6d6da 50%); margin-left: 176px; }
.vscroll .thumb { margin-bottom: 158px; }

.dock { flex: none; width: 295px; display: flex; flex-direction: column; justify-content: space-between; border-left: 1px solid #fff; border-bottom: 1px solid #a0a0a0; }
.dock-head { display: flex; align-items: center; justify-content: space-between; height: 14px; margin-bottom: 1px; padding: 2px 4px 0 3px; }
.dock-head span { width: 274px; height: 5px; border: 1px solid #a0a0a0; border-left: 0; }
.tabs { display: flex; align-items: flex-end; height: 21px; padding-left: 4px; margin-top: 1px; }
.tabs button { width: 42px; height: 19px; padding: 1px 0 0 4px; border: 1px solid #8c8e98; border-bottom: 0; border-left-color: #fff; background: linear-gradient(#f2f2f2 50%, #dcdcdc); text-align: left; }
.tabs button:nth-child(2) { width: 44px; padding-left: 3px; }
.tabs button:last-child { width: 60px; }
.tabs .current { width: 46px; height: 21px; padding: 0 0 3px 7px; border-left-color: #8c8e98; background: #fff; }
.tab-body { margin: 0 4px; padding: 2px 2px 3px 3px; border: 1px solid #8c8e98; border-right-color: #fff; }
table { border-collapse: separate; border-spacing: 0; width: 100%; table-layout: fixed; background: #fff; border: 1px solid #8c8e98; }
th, td { padding: 0; font-weight: 400; text-align: center; }
.layer-list { padding: 1px; }
.layer-list th { height: 24px; background: linear-gradient(#fff 50%, #f4f4f6); border-right: 1px solid #e2e3ea; padding-top: 2px; }
.layer-list th:nth-child(1) { width: 51px; padding-right: 12px; }
.layer-list th:nth-child(3), .layer-list th:nth-child(4) { width: 50px; }
.layer-list td { height: 17px; border-right: 1px solid #e8e8e8; border-bottom: 1px solid #e8e8e8; }
.layer-list .selected td { background: #0000c8; color: #fff; font-size: 12px; line-height: 14px; }
.layer-list .selected td:first-child { background: #000; }
.props { margin-top: 1px; padding: 0 1px; }
.props th { height: 20px; width: 137px; padding-left: 2px; text-align: left; background: #dcdcdc; border-bottom: 1px solid #e6e6e6; border-right: 2px solid #fff; }
.props td { padding: 2px 0 0 3px; text-align: left; border-bottom: 1px solid #e2e2e2; }
.color { display: block; height: 16px; margin: 0 2px 0 -1px; background: #000; }

.btn { height: 21px; border: 1px solid #707070; border-radius: 3px; background: linear-gradient(#f4f4f4, #ececec 48%, #dddddd 52%, #cfcfcf); box-shadow: inset 0 0 0 1px #fbfbfb; }
.btn:disabled { color: #8a8a8a; border-color: #adb2b5; background: #f4f4f4; }
.hot { border-color: #3c7fb1; background: linear-gradient(#eaf6fd, #d9f0fc 48%, #bee6fd 52%, #a7d9f5); box-shadow: inset 0 0 0 1px #46c8f0; }
.lasers { display: flex; gap: 4px; padding: 3px 0 0 3px; }
.lasers .btn { width: 42px; height: 19px; }
.setup { margin-top: 3px; padding: 1px 0 0; border-left: 0; border-right: 0; border-radius: 0; }
.setup legend { margin-left: 5px; }
.setup-grid { display: grid; grid-template-columns: 24px 38px 70px 71px 63px; column-gap: 3px; row-gap: 1px; grid-template-rows: 16px 20px 20px; }
.h { text-align: center; }
.axis { padding: 6px 0 0 8px; }
.setup-grid > input { min-width: 0; padding: 0 5px; border: 1px solid #b4b4b4; border-radius: 2px; color: #808080; }
.mirror { grid-column: 5; grid-row: 2 / 4; display: grid; grid-template-columns: 28px 28px; align-items: center; padding-left: 4px; border: 1px solid #777; color: #808080; }
label { display: flex; align-items: center; }
input[type="checkbox"] { appearance: none; position: relative; flex: none; width: 13px; height: 13px; margin-right: 2px; border: 1px solid #8e8f8f; background: linear-gradient(135deg, #d8dade, #fff); }
input[type="checkbox"]:disabled { border-color: #b8b8b8; background: #f6f6f6; }
input[type="checkbox"]:checked::after { content: ""; position: absolute; left: 2px; top: 1px; width: 7px; height: 9px; background: #24498a; clip-path: polygon(0 50%, 20% 40%, 40% 65%, 80% 0, 100% 0, 50% 100%, 30% 100%); }
.setup-actions { display: flex; align-items: center; gap: 3px; padding-left: 3px; height: 34px; }
.array { width: 30px; height: 33px; border: 2px solid #000; border-radius: 1px; background: #ddd; }
.setup-actions .btn { width: 77px; height: 25px; }
.setup-actions .btn:nth-child(2) { width: 79px; }

.laser { border-top: 1px solid #a0a0a0; padding-bottom: 8px; }
.laser .dock-head { margin-bottom: 3px; }
.laser fieldset { margin: 0 3px 0 5px; padding: 0 9px; }
.laser legend { margin-left: -5px; }
.work-grid { display: grid; grid-template-columns: 90px 99px 70px; column-gap: 3px; row-gap: 4px; padding-top: 3px; }
.save { position: relative; display: flex; }
.save .btn { flex: 1; }
.mark-save { left: -12px; top: -6px; width: 108px; height: 34px; }
.arrow-save { left: -113px; top: -4px; }
.position { display: flex; align-items: center; justify-content: flex-end; gap: 5px; margin: 5px -2px 0 0; }
.position label { padding-top: 7px; }
.combo { position: relative; width: 173px; }
.combo::after { content: ""; position: absolute; right: 4px; top: 9px; border: 4px solid transparent; border-top: 4px solid #000; border-bottom: 0; pointer-events: none; }
.combo select { display: block; appearance: none; width: 100%; height: 21px; padding: 0 2px; border: 1px solid #707070; border-radius: 3px; background: linear-gradient(#f4f4f4, #ececec 48%, #dddddd 52%, #cfcfcf); }
.options { display: flex; justify-content: space-between; padding: 11px 1px 4px 0; }
.checks { display: flex; flex-direction: column; gap: 1px; }
.checks .sub { margin: 3px 0 0 17px; color: #808080; }
.scales { display: flex; flex-direction: column; gap: 4px; width: 70px; }
.laser .device { display: flex; gap: 5px; margin-top: 4px; padding-bottom: 6px; padding-top: 5px; }
.device .btn { width: 90px; }

.colors { display: flex; flex: none; height: 33px; padding: 4px 0 3px 3px; border-top: 1px solid #fff; border-bottom: 1px solid #a0a0a0; }
.colors-side { width: 17px; }
.swatches { display: grid; grid-template-columns: repeat(20, 1fr); gap: 2px; width: 508px; }
.swatches button { border: 1px solid #9a9a9a; border-bottom-color: #fff; }
.c1 { background: #000; } .c2 { background: #00f; } .c3 { background: #f00; } .c4 { background: #0f0; } .c5 { background: #fa8072; }
.c6 { background: #ff0; } .c7 { background: #1e90ff; } .c8 { background: #8b3510; } .c9 { background: #808000; } .c10 { background: #008060; }
.c11 { background: #ff4500; } .c12 { background: #400080; } .c13 { background: #ffd0da; } .c14 { background: #b09df8; } .c15 { background: #d5fb98; }
.c16 { background: #ff9058; } .c17 { background: #db7497; } .c18 { background: #8972dc; } .c19 { background: #75de75; } .c20 { background: #b49f73; }

.status { display: flex; flex: none; height: 21px; padding-top: 2px; gap: 2px; border-top: 1px solid #a0a0a0; background: #f0f0f0; font-size: 12px; }
.status span { border: 1px solid #a0a0a0; border-bottom: 0; background: #f1edeb; }
.s1 { flex: 1; } .s2 { width: 21px; } .s3 { width: 10px; } .s4 { width: 6px; }
.s5 { width: 176px; padding: 1px 0 0 1px; white-space: nowrap; overflow: hidden; font-family: "Noto Sans", sans-serif; font-size: 11px; }
```
